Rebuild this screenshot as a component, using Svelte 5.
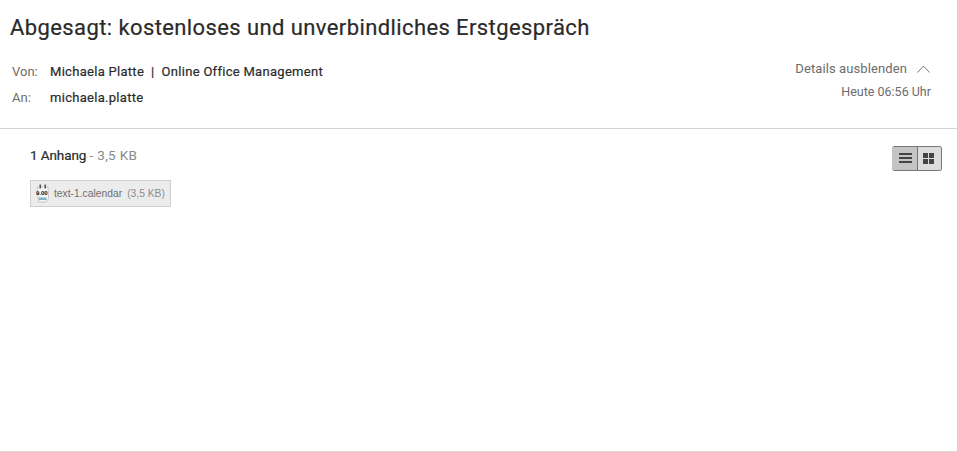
<script>
  const recipients = [
    { label: 'Von:', value: 'Michaela Platte  |  Online Office Management' },
    { label: 'An:', value: 'michaela.platte' }
  ];
</script>

<div class="mail">
  <header class="head">
    <h1>Abgesagt: kostenloses und unverbindliches Erstgespräch</h1>
    <div class="meta">
      <div class="people">
        {#each recipients as r}
          <div class="row">
            <span class="label">{r.label}</span>
            <span class="value">{r.value}</span>
          </div>
        {/each}
      </div>
      <div class="info">
        <div class="toggle">
          <span>Details ausblenden</span>
          <svg width="13" height="8" viewBox="0 0 13 8" fill="none" stroke="#777" stroke-width="1">
            <path d="M0.5 7.5 L6.5 1 L12.5 7.5" />
          </svg>
        </div>
        <div class="date">Heute 06:56 Uhr</div>
      </div>
    </div>
  </header>

  <section class="attachments">
    <div class="att-top">
      <div class="att-title"><b>1 Anhang</b> <span>- 3,5 KB</span></div>
      <div class="switch">
        <button class="list" aria-label="Liste">
          <svg width="13" height="11" viewBox="0 0 13 11" fill="#444">
            <rect y="0" width="13" height="2" />
            <rect y="4" width="13" height="2" />
            <rect y="8" width="13" height="2" />
          </svg>
        </button>
        <button class="grid" aria-label="Kacheln">
          <svg width="11" height="11" viewBox="0 0 11 11" fill="#444">
            <rect x="0" y="0" width="5" height="5" />
            <rect x="6" y="0" width="5" height="5" />
            <rect x="0" y="6" width="5" height="5" />
            <rect x="6" y="6" width="5" height="5" />
          </svg>
        </button>
      </div>
    </div>
    <div class="file">
      <svg class="ico" width="14" height="19" viewBox="0 0 14 19">
        <path d="M1.5 3 H12 L12.5 14.5 L10 18 H2.5 Z" fill="#f7f7f7" stroke="#b5b5b5" stroke-width="0.7" />
        <rect x="3.5" y="0.5" width="1.5" height="4" fill="#555" />
        <rect x="8.5" y="0.5" width="1.5" height="4" fill="#555" />
        <text x="0" y="11" class="clock">9.00</text>
        <rect x="3" y="13.5" width="7.5" height="2.5" fill="#7fb0c6" />
      </svg>
      <span class="name">text-1.calendar</span>
      <span class="size">(3,5 KB)</span>
    </div>
  </section>
</div>

<style>
  :global(body) {
    background: #fff;
  }

  .mail {
    height: 452px;
    box-sizing: border-box;
    border-bottom: 1px solid #d9d9d9;
    font-family: Roboto, "Liberation Sans", sans-serif;
    color: #2b2b2b;
  }

  .head {
    height: 129px;
    box-sizing: border-box;
    border-bottom: 1px solid #d4d4d4;
    padding: 15px 26px 0 10px;
  }

  h1 {
    margin: 0;
    font-size: 22px;
    line-height: 26px;
    font-weight: 400;
    letter-spacing: 0.4px;
    -webkit-text-stroke: 0.2px #262626;
  }

  .meta {
    display: flex;
    justify-content: space-between;
    margin-top: 16px;
    padding-left: 2px;
  }

  .row {
    display: flex;
    height: 26px;
    line-height: 30px;
    font-size: 13px;
  }

  .label {
    width: 38px;
    color: #6c6c6c;
  }

  .value {
    white-space: pre;
    letter-spacing: 0.29px;
    -webkit-text-stroke: 0.2px #2b2b2b;
  }

  .info {
    display: flex;
    flex-direction: column;
    align-items: flex-end;
    font-size: 13px;
    color: #6c6c6c;
  }

  .toggle {
    display: flex;
    align-items: center;
    gap: 10px;
    height: 24px;
    line-height: 24px;
    margin-right: 1px;
    letter-spacing: 0.1px;
  }

  .date {
    margin-top: 1px;
    line-height: 20px;
    font-size: 12.5px;
  }

  .attachments {
    padding: 15px 15px 0 30px;
  }

  .att-top {
    display: flex;
    justify-content: space-between;
    align-items: flex-start;
  }

  .att-title {
    font-size: 13.5px;
    line-height: 22px;
  }

  .att-title b {
    font-weight: 400;
    letter-spacing: -0.1px;
    -webkit-text-stroke: 0.2px #2b2b2b;
  }

  .att-title span {
    color: #8a8a8a;
    letter-spacing: 0.3px;
  }

  .switch {
    display: flex;
    margin-top: 2px;
    width: 50px;
    height: 25px;
    box-sizing: border-box;
    border-radius: 3px;
    overflow: hidden;
    background: #dcdcdc;
    border-top: 1px solid #777;
    border-right: 1px solid #777;
    border-bottom: 1px solid #777;
  }

  .switch button {
    display: flex;
    align-items: center;
    justify-content: center;
    padding: 0;
    border: 0;
    height: 100%;
  }

  .switch .list {
    width: 25px;
    padding-left: 2px;
    background: #c4c4c4;
  }

  .switch .grid {
    flex: 1;
    padding-right: 2px;
    background: #dcdcdc;
    border-left: 1px solid #777;
  }

  .file {
    display: flex;
    align-items: center;
    box-sizing: border-box;
    width: 141px;
    height: 27px;
    margin-top: 9px;
    padding-left: 5px;
    background: #ececec;
    border: 1px solid #cfcfcf;
    font-family: "Liberation Sans", Arial, sans-serif;
    font-size: 10.3px;
    color: #6f6f6f;
  }

  .ico {
    margin-right: 4px;
    flex: none;
  }

  .clock {
    font-family: "Liberation Sans", Arial, sans-serif;
    font-size: 6px;
    font-weight: 700;
    fill: #111;
  }

  .size {
    margin-left: 5px;
    color: #8c8c8c;
  }
</style>
